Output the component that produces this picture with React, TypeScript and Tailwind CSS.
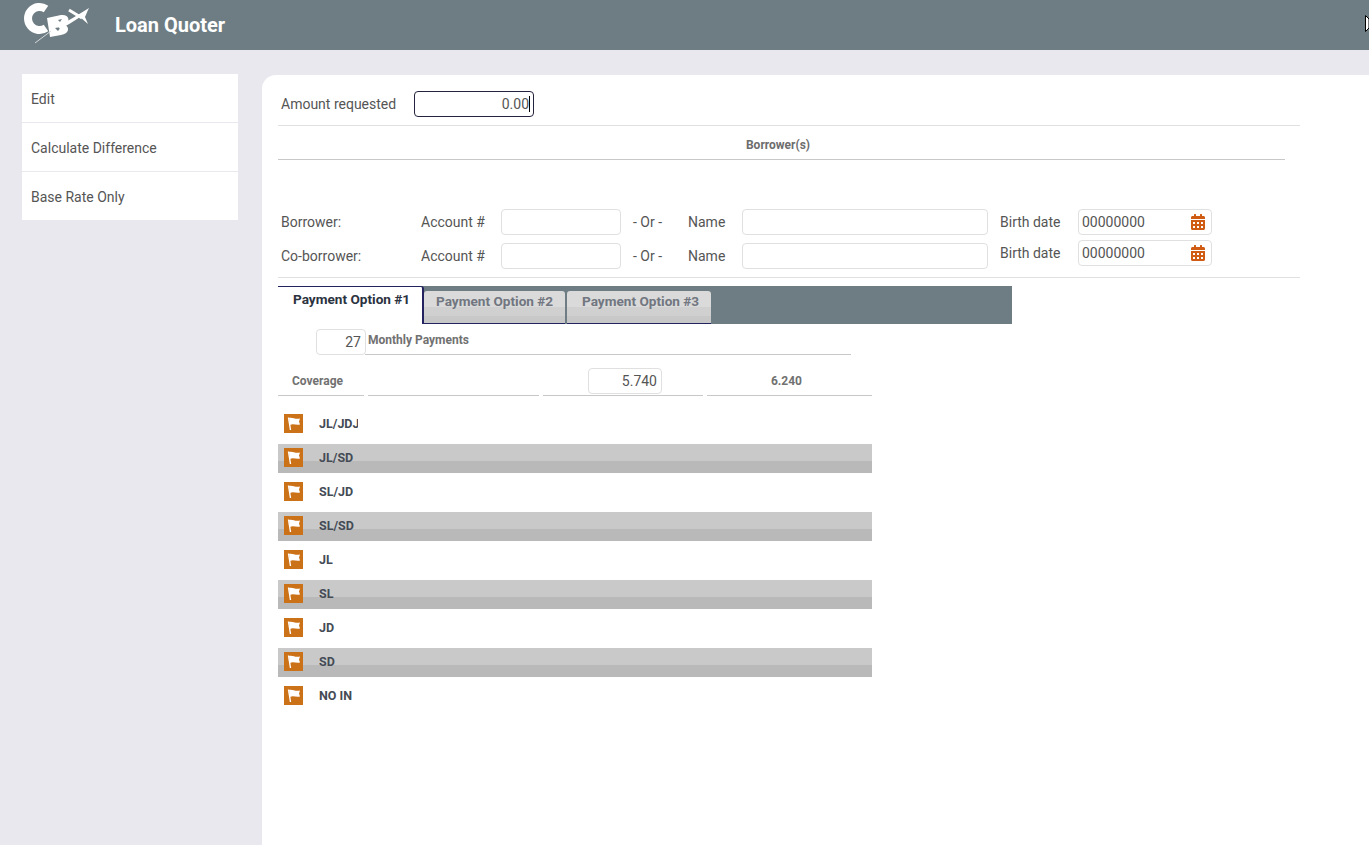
import { FaCalendarAlt } from 'react-icons/fa'

const sidebarItems = ['Edit', 'Calculate Difference', 'Base Rate Only']
const coverages = ['JL/JDJ', 'JL/SD', 'SL/JD', 'SL/SD', 'JL', 'SL', 'JD', 'SD', 'NO IN']

function Logo() {
  return (
    <svg width="70" height="46" viewBox="0 0 70 46" className="ml-[22px] shrink-0 self-start">
      <path d="M24 9 A11.5 11.5 0 1 0 24 28" fill="none" stroke="#fff" strokeWidth="8" />
      <path d="M25 18 L39 15 C47 14 49 21 43 25 C48 27 47 34 39 35 L28 37 Z" fill="#fff" />
      <path d="M36 20 L40 19 L38 22 Z M33 28 L39 27 L36 31 Z" fill="#6e7d83" />
      <path d="M36 26 C46 21 56 15 67 8 C65 12 64 15 63 17 L66 24 L58 17 C52 21 44 26 38 29 Z" fill="#fff" />
      <path d="M47 10 L60 18" stroke="#fff" strokeWidth="3" />
      <path d="M13 43 L29 31" stroke="#d5dadc" strokeWidth="1" />
    </svg>
  )
}

function FlagButton() {
  return (
    <span className="flex h-[19px] w-[19px] shrink-0 items-center justify-center bg-[#cb7117]">
      <svg width="15" height="15" viewBox="0 0 15 15">
        <path d="M2.5 1.5 L4.5 14" stroke="#fff" strokeWidth="1.4" />
        <path d="M3 2 C6 0.8 9 3.5 14 2.5 L13 5.5 L14 8.5 C10 9.5 7 7 4 9 Z" fill="#fff" />
      </svg>
    </span>
  )
}

function TextBox({ width, value = '' }: { width: string; value?: string }) {
  return (
    <div className={`h-[26px] ${width} shrink-0 rounded border border-[#e0e0e0] bg-white px-1 text-right text-sm leading-[24px] text-[#555]`}>
      {value}
    </div>
  )
}

function DateBox() {
  return (
    <div className="flex h-[26px] w-[134px] items-center justify-between rounded border border-[#e0e0e0] bg-white pl-[3px] pr-[5px] text-sm text-[#555]">
      <span>00000000</span>
      <FaCalendarAlt className="text-[16px] text-[#cf5c12]" />
    </div>
  )
}

function BorrowerRow({ label, offset }: { label: string; offset: string }) {
  return (
    <div className="flex h-[26px] items-center text-sm text-[#555]">
      <span className="w-[143px] pl-[3px]">{label}</span>
      <span className="w-[80px]">Account #</span>
      <TextBox width="w-[120px]" />
      <span className="ml-3 w-[55px]">- Or -</span>
      <span className="w-[54px]">Name</span>
      <TextBox width="w-[246px]" />
      <div className={`flex items-center ${offset}`}>
        <span className="ml-3 w-[78px]">Birth date</span>
        <DateBox />
      </div>
    </div>
  )
}

export default function App() {
  return (
    <div className="relative h-screen overflow-hidden bg-[#e8e8ee] font-['Roboto',sans-serif]">
      <header className="flex h-[50px] items-center bg-[#6e7d83]">
        <Logo />
        <h1 className="ml-[23px] text-[20px] font-bold text-white">Loan Quoter</h1>
      </header>
      <svg width="4" height="18" viewBox="0 0 4 18" className="absolute right-0 top-[15px]">
        <path d="M0.5 0.5 L4 4 V13 L0.5 16.5 Z" fill="#fff" stroke="#000" />
      </svg>

      <div className="flex items-start">
        <nav className="ml-[22px] mt-6 w-[216px] bg-white text-sm text-[#555]">
          {sidebarItems.map((item, i) => (
            <div
              key={item}
              className={`flex items-center pl-[9px] ${i < 2 ? 'h-[49px] border-b border-[#e8e8ee] pt-[2px]' : 'h-[48px] pt-[1px]'}`}
            >
              {item}
            </div>
          ))}
        </nav>

        <main className="ml-6 mt-[25px] h-[770px] flex-1 rounded-tl-[14px] bg-white pl-4 pt-4">
          <div className="w-[1022px]">
            <div className="flex h-[35px] items-start border-b border-[#e0e0e0] text-sm text-[#555]">
              <span className="ml-[3px] w-[133px] leading-[26px]">Amount requested</span>
              <div className="h-[26px] w-[120px] rounded border border-[#23233f] pr-[3px] text-right leading-[24px]">
                0.00<span className="border-r border-black"></span>
              </div>
            </div>
            <div className="h-[34px] w-[1007px] border-b border-[#c8c8c8] pr-[7px] pt-[11px] text-center text-xs font-bold leading-[16px] text-[#6d6d6d]">
              Borrower(s)
            </div>
            <div className="mt-[49px]">
              <BorrowerRow label="Borrower:" offset="" />
            </div>
            <div className="mt-2">
              <BorrowerRow label="Co-borrower:" offset="-translate-y-[3px]" />
            </div>
            <div className="mt-2 border-b border-[#e0e0e0]"></div>
          </div>

          <div className="mt-2 flex h-[38px] w-[734px] items-start bg-[#6e7d83] text-[13.6px] font-bold">
            <div className="h-[38px] w-[146px] rounded-tr-[3px] border-r-2 border-t border-[#23235f] bg-white pl-[15px] pt-1 leading-[16px] text-[#2b3240]">
              Payment Option #1
            </div>
            <div className="mt-[5px] flex h-[33px] w-[141px] rounded-t-[3px] border-b border-[#23235f] bg-[linear-gradient(#dadada_0,#dadada_50%,#d0d0d0_50%,#d0d0d0_78%,#c8c8c8_78%,#c8c8c8_100%)] pl-3 pt-[2px] leading-[16px] text-[#717680]">
              Payment Option #2
            </div>
            <div className="ml-[2px] mt-[5px] flex h-[33px] w-[144px] rounded-t-[3px] border-b border-[#23235f] bg-[linear-gradient(#dadada_0,#dadada_50%,#d0d0d0_50%,#d0d0d0_78%,#c8c8c8_78%,#c8c8c8_100%)] pl-[15px] pt-[2px] leading-[16px] text-[#717680]">
              Payment Option #3
            </div>
          </div>

          <div className="ml-[38px] mt-[5px] flex h-[26px] w-[535px] items-start">
            <TextBox width="w-[50px]" value="27" />
            <span className="-ml-[1px] h-[26px] flex-1 border-b border-[#c8c8c8] pl-[3px] pt-[3px] text-xs font-bold leading-[16px] text-[#717171]">Monthly Payments</span>
          </div>

          <div className="mt-[13px] flex h-[28px] w-[594px] gap-1 text-xs font-bold text-[#717171]">
            <div className="w-[86px] border-b border-[#c8c8c8] pl-[14px] leading-[26px]">Coverage</div>
            <div className="w-[171px] border-b border-[#c8c8c8]"></div>
            <div className="w-[160px] border-b border-[#c8c8c8] pl-[45px] font-normal">
              <TextBox width="w-[74px]" value="5.740" />
            </div>
            <div className="w-[165px] border-b border-[#c8c8c8] pr-[6px] text-center leading-[26px]">6.240</div>
          </div>

          <div className="mt-[14px] flex w-[594px] flex-col gap-[5px] text-[12.5px] font-bold text-[#444b55]">
            {coverages.map((name, i) => (
              <div
                key={name}
                className={`flex h-[29px] items-start pl-[6px] pt-[4px] ${i % 2 === 1 ? 'bg-[linear-gradient(#c9c9c9_0,#c9c9c9_60%,#b9b9b9_60%,#b9b9b9_100%)]' : ''}`}
              >
                <FlagButton />
                <span className="ml-4 w-[39px] overflow-hidden whitespace-nowrap leading-[19px]">{name}</span>
              </div>
            ))}
          </div>
        </main>
      </div>
    </div>
  )
}
